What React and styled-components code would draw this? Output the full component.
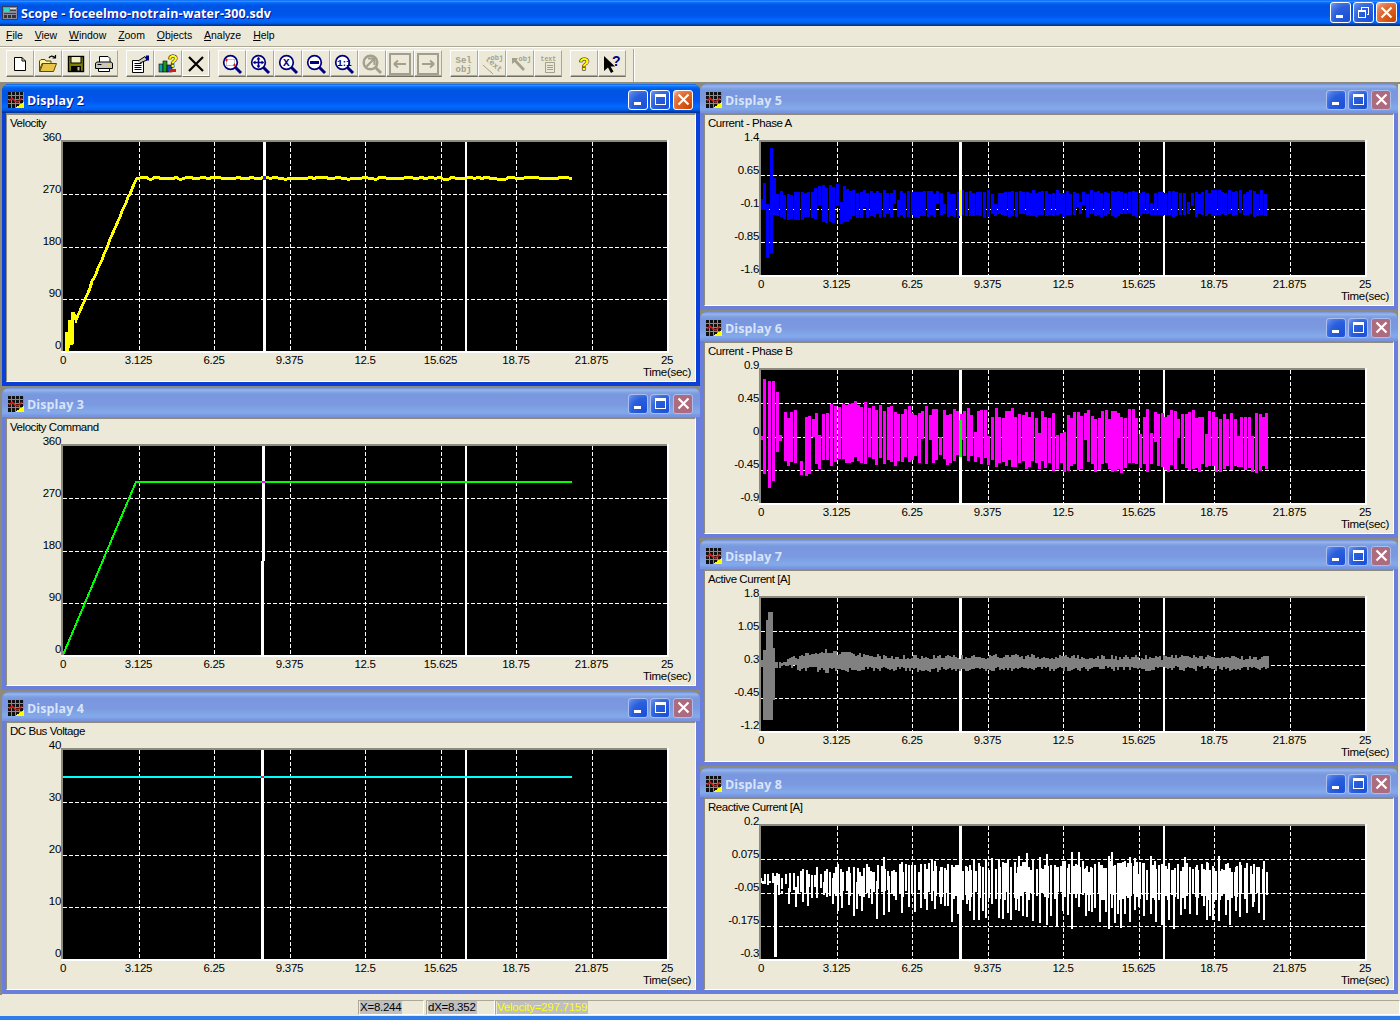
import React from 'react'
import styled, { createGlobalStyle } from 'styled-components'

const Global = createGlobalStyle`
  html, body { margin: 0; padding: 0; background: #ece9d8; }
  * { box-sizing: border-box; }
`

const UI_FONT = '"Liberation Sans", Arial, sans-serif'
const CAPTION_FONT = '"Open Sans", "DejaVu Sans", sans-serif'

const ACTIVE_GRADIENT = `linear-gradient(180deg, #0058ee 0%, #3593ff 4%, #288eff 6%, #127dff 8%, #036ffc 10%, #0262ee 14%, #0057e5 20%, #0054e3 24%, #0055eb 56%, #005bf5 66%, #026afe 76%, #0062ef 86%, #0052d6 92%, #0040ab 94%, #003092 100%)`
const INACTIVE_GRADIENT = `linear-gradient(180deg, #7697e7 0%, #7e9ee3 3%, #94afe8 6%, #97b4e9 8%, #82a5e4 14%, #7c9fe2 17%, #7996de 25%, #7b99e1 56%, #82a9e9 81%, #80a5e7 89%, #7b96e1 94%, #7a93df 97%, #7a93df 100%)`

const Root = styled.div`
  width: 1400px;
  height: 1020px;
  display: flex;
  flex-direction: column;
  overflow: hidden;
  background: #ece9d8;
  font: 11px ${UI_FONT};
  color: #000;
`

const TitleBar = styled.div`
  height: 26px;
  flex: none;
  display: flex;
  align-items: center;
  padding: 0 3px 1px 2px;
  gap: 3px;
  background: ${ACTIVE_GRADIENT};
`

const TitleText = styled.div`
  flex: 1;
  padding-top: 1px;
  color: #fff;
  font: bold 12.5px ${CAPTION_FONT};
  letter-spacing: 0.1px;
  text-shadow: 1px 1px #0f1089;
`

const CaptionButtons = styled.div`
  display: flex;
  gap: 2px;
`

const CaptionButton = styled.div`
  width: ${p => p.$big ? 21 : 20}px;
  height: ${p => p.$big ? 21 : 20}px;
  margin-left: ${p => p.$close && !p.$big ? 1 : 0}px;
  border-radius: 3px;
  display: flex;
  align-items: center;
  justify-content: center;
  border: 1px solid ${p => p.$active ? '#fff' : '#a9bdee'};
  background: ${p => p.$close
    ? (p.$active
      ? 'radial-gradient(circle at 90% 90%, #cc4600 0, #dc6527 55%, #e8835a 80%, #ffccb2 100%)'
      : '#ad6c7e')
    : 'radial-gradient(circle at 85% 85%, #1c50d8 0, #2a5fdc 55%, #4d7be6 80%, #7d9cee 100%)'};
`

const MenuBar = styled.div`
  height: 20px;
  flex: none;
  display: flex;
  align-items: center;
  gap: 12px;
  padding: 0 0 2px 6px;
`

const MenuItem = styled.span`
  font-size: 10.5px;
  letter-spacing: -0.05px;
  u { text-decoration: underline; }
`

const Toolbar = styled.div`
  height: 36px;
  flex: none;
  display: flex;
  align-items: flex-start;
  padding: 3px 0 0 6px;
  border-top: 1px solid #aca899;
  box-shadow: inset 0 1px 0 #fff;
`

const ToolGroup = styled.div`
  display: flex;
  margin-right: 8px;
`

const ToolButton = styled.div`
  width: 28px;
  height: 27px;
  display: flex;
  align-items: center;
  justify-content: center;
  background: #ece9d8;
  border-top: 1px solid #fff;
  border-left: 1px solid #fff;
  border-right: 1px solid #aca899;
  border-bottom: 1px solid #716f64;
  box-shadow: ${p => p.$flat ? 'inset -1px -1px 0 #fff' : 'inset 0 -1px 0 #aca899'};
`

const ToolDivider = styled.div`
  width: 2px;
  height: 33px;
  margin: -1px 0 0 -1px;
  border-left: 1px solid #aca899;
  border-right: 1px solid #fff;
`

const Workspace = styled.div`
  height: 913px;
  flex: none;
  display: flex;
  align-items: flex-start;
  border-top: 2px solid #8d8b7e;
  border-left: 2px solid #8d8b7e;
`

const Column = styled.div`
  width: 698px;
  display: flex;
  flex-direction: column;
  gap: 2px;
  background: #8d8b7e;
`

const Win = styled.div`
  height: ${p => p.$height}px;
  display: flex;
  flex-direction: column;
  border-radius: 7px 7px 0 0;
  overflow: hidden;
  background: ${p => p.$active ? '#0a3fd8' : '#6a7fdc'};
`

const Caption = styled.div`
  height: 29px;
  flex: none;
  display: flex;
  align-items: center;
  padding: 2px 7px 0 6px;
  gap: 3px;
  background: ${p => p.$active ? ACTIVE_GRADIENT : INACTIVE_GRADIENT};
`

const CaptionTitle = styled.div`
  flex: 1;
  padding-top: 1px;
  font: bold 12.5px ${CAPTION_FONT};
  letter-spacing: 0.1px;
  color: ${p => p.$active ? '#fff' : '#d8e4f8'};
  text-shadow: ${p => p.$active ? '1px 1px #0f1089' : 'none'};
`

const Body = styled.div`
  flex: 1;
  margin: 0 4px 4px 4px;
  display: flex;
  flex-direction: column;
  background: #ece9d8;
  border-top: 2px solid #8d8b7e;
  border-left: 1px solid #8d8b7e;
  border-right: 1px solid #fff;
  border-bottom: 1px solid #fff;
`

const PlotTitle = styled.div`
  height: 14px;
  flex: none;
  padding: 2px 0 0 3px;
  line-height: 13px;
  font-size: 11.5px;
  letter-spacing: -0.45px;
`

const Chart = styled.svg`
  display: block;
  flex: none;
`

const AxisText = styled.text`
  font: 11.5px ${UI_FONT};
  letter-spacing: -0.3px;
  fill: #000;
`

const StatusBar = styled.div`
  height: 21px;
  flex: none;
  display: flex;
  align-items: flex-end;
  padding: 0 0 1px 358px;
`

const StatusCell = styled.div`
  width: ${p => p.$width ? `${p.$width}px` : 'auto'};
  flex: ${p => p.$width ? 'none' : '1'};
  height: 15px;
  margin-right: ${p => p.$gap || 0}px;
  padding: 0 0 0 1px;
  display: flex;
  align-items: center;
  border-top: 1px solid #aca899;
  border-left: 1px solid #aca899;
  border-bottom: 1px solid #fff;
  border-right: 1px solid #fff;
`

const StatusText = styled.span`
  background: #c0c0c0;
  color: ${p => p.$color || '#000'};
  font-size: 11.5px;
  letter-spacing: -0.25px;
  line-height: 13px;
  padding-right: 1px;
`

const BottomStrip = styled.div`
  height: 4px;
  flex: none;
  background: #2f7de8;
`

// ---- small drawings ----

const AppIcon = () => (
  <svg width="16" height="16" viewBox="0 0 16 16" shapeRendering="crispEdges">
    <rect x="0" y="1" width="16" height="14" fill="#3a3a5a" />
    <rect x="1" y="2" width="14" height="12" fill="#8a8a9c" />
    <rect x="2" y="3" width="5" height="4" fill="#30d8c8" />
    <rect x="8" y="3" width="6" height="1" fill="#dddddd" />
    <rect x="8" y="5" width="6" height="1" fill="#444" />
    <rect x="2" y="8" width="12" height="1" fill="#444" />
    <rect x="2" y="10" width="3" height="3" fill="#333" />
    <rect x="6" y="10" width="3" height="3" fill="#333" />
    <rect x="10" y="10" width="4" height="3" fill="#333" />
  </svg>
)

const DisplayIcon = () => (
  <svg width="16" height="16" viewBox="0 0 16 16" shapeRendering="crispEdges">
    <rect width="16" height="16" fill="#111" />
    <path d="M3 0V16M7 0V16M11 0V16M15 0V16M0 3H16M0 7H16M0 11H16" stroke="#8a8a8a" strokeWidth="1" />
    <path d="M1 9L4 6L7 9L10 10L14 6" stroke="#e01818" strokeWidth="1.5" fill="none" shapeRendering="auto" />
    <path d="M7 16L16 10V16Z" fill="#ffff00" />
  </svg>
)

const Glyph = ({ type }) => {
  if (type === 'min') return <svg width="13" height="13" viewBox="0 0 13 13"><rect x="2" y="9" width="7" height="3" fill="#fff" /></svg>
  if (type === 'max') return (
    <svg width="13" height="13" viewBox="0 0 13 13" shapeRendering="crispEdges">
      <path d="M1.5 3.5H11.5V11.5H1.5Z" fill="none" stroke="#fff" />
      <rect x="1" y="1" width="11" height="3" fill="#fff" />
    </svg>
  )
  if (type === 'restore') return (
    <svg width="13" height="13" viewBox="0 0 13 13" shapeRendering="crispEdges">
      <path d="M4.5 3.5V1.5H11.5V8.5H9.5" fill="none" stroke="#fff" />
      <path d="M1.5 4.5H8.5V11.5H1.5Z" fill="none" stroke="#fff" />
      <rect x="1" y="4" width="8" height="2" fill="#fff" />
    </svg>
  )
  return <svg width="13" height="13" viewBox="0 0 13 13"><path d="M1.5 1.5L11.5 11.5M11.5 1.5L1.5 11.5" stroke="#fff" strokeWidth="2.2" /></svg>
}

const IconSvg = ({ children }) => (
  <svg width="22" height="22" viewBox="0 0 22 22">{children}</svg>
)

const Lens = ({ color = '#000080', children }) => (
  <IconSvg>
    <path d="M14 14L20 20" stroke={color} strokeWidth="3" />
    <circle cx="9.5" cy="9.5" r="6.8" fill={color === '#000080' ? '#fff' : '#ece9d8'} stroke={color} strokeWidth={color === '#000080' ? 1.7 : 2.4} />
    {children}
  </IconSvg>
)

const IconText = styled.text`
  font: bold ${p => p.$size || 9}px "Liberation Mono", monospace;
  letter-spacing: ${p => p.$tight ? '-1.2px' : '0'};
  fill: ${p => p.$fill || '#a39f8e'};
`

const HelpMark = styled.text`
  font: bold ${p => p.$size || 17}px "Liberation Sans", sans-serif;
  fill: ${p => p.$fill};
  stroke: ${p => p.$line || 'none'};
  stroke-width: 1px;
  paint-order: stroke;
`

const GRAY = '#a39f8e'

const icons = {
  page: (
    <IconSvg>
      <path d="M5.5 4.5H13L16.5 8V17.5H5.5Z" fill="#fff" stroke="#000" />
      <path d="M13 4.5V8H16.5" fill="none" stroke="#000" />
    </IconSvg>
  ),
  open: (
    <IconSvg>
      <path d="M2.5 8V18.5H16.5L19.5 10.5H6L3 18" fill="#e8c448" stroke="#5a4a00" />
      <path d="M2.5 8L4 6.5H8L9 8H14V10.5H5L2.5 17Z" fill="#fff3a0" stroke="#5a4a00" />
      <path d="M12 5C13 2.5 16 2.5 18 4.5M18.5 2V5H15.5" fill="none" stroke="#000" strokeWidth="1.2" />
    </IconSvg>
  ),
  save: (
    <IconSvg>
      <rect x="3.5" y="3.5" width="15" height="15" fill="#808000" stroke="#000" strokeWidth="1.4" />
      <rect x="6" y="3.5" width="10" height="6.5" fill="#f4f0c0" stroke="#000" />
      <rect x="6" y="13" width="10" height="5.5" fill="#000" />
      <rect x="12.5" y="14" width="2" height="3.5" fill="#c0c0a0" />
    </IconSvg>
  ),
  print: (
    <IconSvg>
      <path d="M6.5 9.5V3.5H15L17 5.5V9.5" fill="#fff" stroke="#000" />
      <path d="M2.5 11C2.5 9.5 3.5 9 5 9H17C18.5 9 19.5 9.5 19.5 11V15.5H2.5Z" fill="#c8c8c0" stroke="#000" />
      <rect x="4.5" y="11" width="4" height="1" fill="#000" />
      <rect x="14" y="11" width="3" height="1.5" fill="#e8d040" />
      <path d="M5.5 15.5H16.5V18.5H5.5Z" fill="#fff" stroke="#000" />
    </IconSvg>
  ),
  props: (
    <IconSvg>
      <path d="M3.5 7.5H14.5V19.5H3.5Z" fill="#fff" stroke="#000" />
      <path d="M5.5 10.5H12.5M5.5 12.5H12.5M5.5 14.5H12.5M5.5 16.5H12.5" stroke="#000" />
      <path d="M9 8L16 3.5L18 7L11 10" fill="#c8c8c0" stroke="#000" />
      <rect x="17" y="2.5" width="3" height="5" fill="#000080" />
    </IconSvg>
  ),
  wizard: (
    <IconSvg>
      <rect x="2" y="11" width="4" height="8" fill="#18a0a0" stroke="#000" strokeWidth="0.6" />
      <rect x="6" y="8" width="4" height="11" fill="#18a018" stroke="#000" strokeWidth="0.6" />
      <rect x="10" y="12" width="5" height="7" fill="#1848c8" stroke="#000" strokeWidth="0.6" />
      <rect x="12" y="16" width="7" height="3" fill="#d81818" />
      <HelpMark x="11" y="14" $size={16} $fill="#ffff00" $line="#000">?</HelpMark>
    </IconSvg>
  ),
  cross: (
    <IconSvg>
      <path d="M4 4L18 18M18 4L4 18" stroke="#000" strokeWidth="2.2" />
    </IconSvg>
  ),
  zoomBox: (
    <Lens>
      <rect x="5.5" y="6.5" width="8" height="6" fill="none" stroke="#808080" strokeDasharray="1 1" />
      <path d="M4 7H7M5.5 5.5V8.5M12 12H15M13.5 10.5V13.5" stroke="#d01818" />
    </Lens>
  ),
  zoomIn: (
    <Lens>
      <path d="M9.5 4.5V14.5M4.5 9.5H14.5" stroke="#000080" strokeWidth="1.6" />
      <path d="M7.5 6.5L9.5 4L11.5 6.5ZM7.5 12.5L9.5 15L11.5 12.5ZM6.5 7.5L4 9.5L6.5 11.5ZM12.5 7.5L15 9.5L12.5 11.5Z" fill="#000080" />
    </Lens>
  ),
  zoomX: (
    <Lens>
      <IconText x="6" y="13" $size={11} $fill="#000080">X</IconText>
    </Lens>
  ),
  zoomOut: (
    <Lens>
      <rect x="5" y="8" width="9" height="3" fill="#000080" />
    </Lens>
  ),
  zoomOne: (
    <Lens>
      <IconText x="4" y="13" $size={9.5} $fill="#000080" $tight>1:1</IconText>
    </Lens>
  ),
  zoomOff: (
    <Lens color={GRAY}>
      <path d="M5.5 13.5L13 6M7 5.5H13.5V12" fill="none" stroke={GRAY} strokeWidth="2.2" />
    </Lens>
  ),
  backOff: (
    <IconSvg>
      <rect x="1" y="1" width="20" height="20" fill="none" stroke={GRAY} strokeWidth="2" />
      <path d="M5 11H17M5 11L9 7.5M5 11L9 14.5" fill="none" stroke={GRAY} strokeWidth="2" />
    </IconSvg>
  ),
  nextOff: (
    <IconSvg>
      <rect x="1" y="1" width="20" height="20" fill="none" stroke={GRAY} strokeWidth="2" />
      <path d="M5 11H17M17 11L13 7.5M17 11L13 14.5" fill="none" stroke={GRAY} strokeWidth="2" />
    </IconSvg>
  ),
  selObj: (
    <IconSvg>
      <IconText x="2.5" y="10">Sel</IconText>
      <IconText x="2.5" y="19">obj</IconText>
    </IconSvg>
  ),
  textObj: (
    <IconSvg>
      <IconText x="9.5" y="7" $size={7}>obj</IconText>
      <g transform="translate(4 7) rotate(40)">
        <IconText x="0" y="0" $size={8}>text</IconText>
      </g>
      <path d="M2 12L12 21" stroke={GRAY} />
    </IconSvg>
  ),
  arrowObj: (
    <IconSvg>
      <IconText x="9.5" y="8" $size={7}>obj</IconText>
      <path d="M3 5H9L7.5 7L16 16L14 18L5.5 9L3 11Z" fill={GRAY} />
    </IconSvg>
  ),
  textDoc: (
    <IconSvg>
      <IconText x="3.5" y="8" $size={6.5}>text</IconText>
      <path d="M8.5 9.5H17.5V19.5H8.5Z" fill="#ece9d8" stroke={GRAY} />
      <path d="M10 12.5H16M10 14.5H16M10 16.5H16" stroke={GRAY} />
    </IconSvg>
  ),
  help: (
    <IconSvg>
      <HelpMark x="6" y="17" $fill="#ffff00" $line="#000">?</HelpMark>
    </IconSvg>
  ),
  cursorHelp: (
    <IconSvg>
      <path d="M3 3V18L7 14.5L10 20L12.5 18.5L9.5 13.5H14Z" fill="#000" />
      <HelpMark x="11" y="13" $size={14} $fill="#000080">?</HelpMark>
    </IconSvg>
  ),
}

const toolGroups = [
  ['page', 'open', 'save', 'print'],
  ['props', 'wizard', 'cross'],
  ['zoomBox', 'zoomIn', 'zoomX', 'zoomOut', 'zoomOne', 'zoomOff', 'backOff', 'nextOff'],
  ['selObj', 'textObj', 'arrowObj', 'textDoc'],
  ['help', 'cursorHelp'],
]

// ---- chart data ----

const makeRandom = seed => () => {
  seed |= 0
  seed = (seed + 0x6d2b79f5) | 0
  let t = Math.imul(seed ^ (seed >>> 15), 1 | seed)
  t = (t + Math.imul(t ^ (t >>> 7), 61 | t)) ^ t
  return ((t ^ (t >>> 14)) >>> 0) / 4294967296
}

const envelope = pts => x => {
  if (x <= pts[0][0]) return pts[0][1]
  for (let i = 1; i < pts.length; i++) {
    if (x <= pts[i][0]) {
      const [x0, y0] = pts[i - 1]
      const [x1, y1] = pts[i]
      return y0 + (y1 - y0) * (x - x0) / (x1 - x0)
    }
  }
  return pts[pts.length - 1][1]
}

// vertical strokes between an upper and lower envelope, the way the sampled traces look
const strokes = ({ seed, from, to, step, top, bottom, jitter, full = 1, center, reach = 4 }) => {
  const r = makeRandom(seed)
  const topAt = envelope(top)
  const botAt = envelope(bottom)
  let d = ''
  let x = from
  while (x < to) {
    let t = topAt(x) + r() * jitter
    let b = botAt(x) - r() * jitter
    if (r() > full) {
      if (r() < 0.5) b = center + r() * reach
      else t = center - r() * reach
    }
    d += `M${x} ${Math.round(t)}V${Math.round(b)}`
    x += step[0] + Math.floor(r() * (step[1] - step[0] + 1))
  }
  return d
}

const bars = list => list.map(([x, t, b]) => `M${x} ${t}V${b}`).join('')

const rampNoise = () => {
  const r = makeRandom(11)
  let d = 'M3 209V190L4 209L6 203L7 178L9 203L10 170L13 178L15 173'
  for (let x = 17; x <= 72; x += 2) {
    const y = 209 - 40 - (x - 17) * 2.36 + (r() - 0.5) * 3
    d += `L${x} ${Math.round(y)}`
  }
  for (let x = 74; x <= 509; x += 3) {
    d += `L${x} ${36 + Math.round((r() - 0.5) * 2.6)}`
  }
  return d
}

const LEFT = { height: 209, second: 402 }
const RIGHT = { height: 133, first: 198, second: 402 }

const displays = {
  left: [
    {
      id: 2, active: true, title: 'Velocity', yLabels: ['360', '270', '180', '90', '0'], first: 200, ...LEFT,
      traces: [{ d: rampNoise(), color: '#ffff00', width: 3 }],
      tint: { y: 34, h: 4, color: '#2020ff' },
    },
    {
      id: 3, title: 'Velocity Command', yLabels: ['360', '270', '180', '90', '0'], first: 199, shiftAt: 115, ...LEFT,
      traces: [{ d: 'M0 209L73 36H509', color: '#00ff00', width: 2 }],
      tint: { y: 35, h: 2, color: '#ff00ff' },
    },
    {
      id: 4, title: 'DC Bus Voltage', yLabels: ['40', '30', '20', '10', '0'], first: 198, ...LEFT,
      traces: [{ d: 'M0 27H509', color: '#00ffff', width: 2 }],
      tint: { y: 26, h: 2, color: '#ff2020' },
    },
  ],
  right: [
    {
      id: 5, title: 'Current - Phase A', yLabels: ['1.4', '0.65', '-0.1', '-0.85', '-1.6'], ...RIGHT,
      traces: [
        {
          d: strokes({
            seed: 5, from: 16, to: 508, step: [3, 4], jitter: 4, full: 0.86, center: 62, reach: 4,
            top: [[14, 49], [50, 49], [55, 42], [80, 42], [95, 48], [508, 48]],
            bottom: [[14, 77], [50, 79], [80, 84], [95, 76], [508, 75]],
          }),
          color: '#0000ff', width: 3,
        },
        { d: bars([[1, 57, 68], [3, 41, 68], [6, 62, 116], [10, 6, 111], [13, 36, 73]]), color: '#0000ff', width: 3 },
      ],
      tint: { y: 48, h: 26, color: '#ffff00' },
    },
    {
      id: 6, title: 'Current - Phase B', yLabels: ['0.9', '0.45', '0', '-0.45', '-0.9'], ...RIGHT,
      traces: [
        { d: bars([[1, 66, 70], [3, 9, 104], [8, 11, 118], [12, 11, 111], [16, 22, 82], [19, 65, 71], [24, 42, 91], [27, 48, 96], [30, 42, 92], [34, 40, 93], [40, 91, 105]]), color: '#ff00ff', width: 3 },
        {
          d: strokes({
            seed: 6, from: 45, to: 508, step: [3, 4], jitter: 10, full: 0.85, center: 67, reach: 6,
            top: [[45, 42], [70, 32], [100, 30], [140, 35], [250, 38], [508, 40]],
            bottom: [[45, 106], [60, 100], [90, 96], [200, 95], [300, 102], [508, 104]],
          }),
          color: '#ff00ff', width: 3,
        },
      ],
      tint: { y: 50, h: 37, color: '#00ff00' },
    },
    {
      id: 7, title: 'Active Current [A]', yLabels: ['1.8', '1.05', '0.3', '-0.45', '-1.2'], ...RIGHT,
      traces: [
        { d: bars([[1, 62, 69], [3, 52, 122], [6, 22, 122], [8, 14, 122], [10, 14, 122], [12, 50, 102], [15, 64, 70]]), color: '#808080', width: 3 },
        {
          d: strokes({
            seed: 7, from: 19, to: 508, step: [2, 2], jitter: 5,
            top: [[19, 64], [25, 60], [45, 54], [60, 51], [75, 52], [90, 54], [120, 56], [508, 57]],
            bottom: [[19, 70], [40, 73], [70, 75], [100, 74], [508, 73]],
          }),
          color: '#808080', width: 2,
        },
      ],
    },
    {
      id: 8, title: 'Reactive Current [A]', yLabels: ['0.2', '0.075', '-0.05', '-0.175', '-0.3'], ...RIGHT,
      traces: [
        {
          d: strokes({
            seed: 28, from: 12, to: 508, step: [3, 7], jitter: 24,
            top: [[0, 44], [100, 32], [350, 24], [508, 28]],
            bottom: [[0, 70], [60, 90], [200, 100], [400, 106], [508, 96]],
          }),
          color: '#fff', width: 2,
        },
        {
          d: strokes({
            seed: 18, from: 0, to: 508, step: [2, 4], jitter: 9,
            top: [[0, 48], [30, 42], [100, 38], [350, 34], [508, 38]],
            bottom: [[0, 62], [50, 70], [200, 74], [508, 76]],
          }),
          color: '#fff', width: 2,
        },
        { d: bars([[14, 50, 131]]), color: '#fff', width: 3 },
      ],
    },
  ],
}

const X_LABELS = ['0', '3.125', '6.25', '9.375', '12.5', '15.625', '18.75', '21.875', '25']
const PLOT_LEFT = 56
const PLOT_TOP = 13
const PLOT_WIDTH = 604

const Plot = ({ height, yLabels, traces, first, second, tint, shiftAt }) => {
  const bottom = PLOT_TOP + height
  const right = PLOT_LEFT + PLOT_WIDTH
  const breakY = shiftAt || height
  return (
    <Chart width="688" height={height + 42}>
      <g shapeRendering="crispEdges">
        <rect x={PLOT_LEFT - 2} y={PLOT_TOP - 2} width={PLOT_WIDTH + 4} height={height + 4} fill="#fff" />
        <rect x={PLOT_LEFT - 2} y={PLOT_TOP - 2} width={PLOT_WIDTH + 2} height={height + 2} fill="#8d8b7e" />
        <rect x={PLOT_LEFT} y={PLOT_TOP} width={PLOT_WIDTH} height={height} fill="#000" />
      </g>
      <svg x={PLOT_LEFT} y={PLOT_TOP} width={PLOT_WIDTH} height={height} overflow="hidden">
        <g stroke="#fff" strokeDasharray="4 2" shapeRendering="crispEdges">
          {[1, 2, 3].map(i => {
            const y = Math.round(height * i / 4) + 0.5
            return <line key={i} x1="0" x2={PLOT_WIDTH} y1={y} y2={y} />
          })}
          {[1, 2, 3, 4, 5, 6, 7].map(i => {
            const x = Math.round(PLOT_WIDTH * i / 8) + 0.5
            return <line key={i} x1={x} x2={x} y1="0" y2={height} />
          })}
        </g>
        <g shapeRendering="crispEdges" fill="#fff">
          <rect x={first} y="0" width="3" height={breakY} />
          {shiftAt && <rect x={first - 1} y={shiftAt} width="3" height={height - shiftAt} />}
          <rect x={second} y="0" width="2" height={height} />
        </g>
        {traces.map((t, i) => (
          <path key={i} d={t.d} fill="none" stroke={t.color} strokeWidth={t.width} shapeRendering="crispEdges" />
        ))}
        {tint && <rect x={first} y={tint.y} width="3" height={tint.h} fill={tint.color} shapeRendering="crispEdges" />}
      </svg>
      {yLabels.map((label, i) => (
        <AxisText key={label} x={PLOT_LEFT - 2} y={PLOT_TOP - 1 + i * (height - 1.5) / 4} textAnchor="end">{label}</AxisText>
      ))}
      {X_LABELS.map((label, i) => (
        <AxisText key={label} x={PLOT_LEFT + PLOT_WIDTH * i / 8} y={bottom + 13} textAnchor="middle">{label}</AxisText>
      ))}
      <AxisText x={right + 24} y={bottom + 25} textAnchor="end">Time(sec)</AxisText>
    </Chart>
  )
}

const DisplayWindow = ({ display, height }) => {
  const { id, active, title, ...plot } = display
  return (
    <Win $height={height} $active={active}>
      <Caption $active={active}>
        <DisplayIcon />
        <CaptionTitle $active={active}>Display {id}</CaptionTitle>
        <CaptionButtons>
          <CaptionButton $active={active}><Glyph type="min" /></CaptionButton>
          <CaptionButton $active={active}><Glyph type="max" /></CaptionButton>
          <CaptionButton $active={active} $close><Glyph type="close" /></CaptionButton>
        </CaptionButtons>
      </Caption>
      <Body>
        <PlotTitle>{title}</PlotTitle>
        <Plot {...plot} />
      </Body>
    </Win>
  )
}

const menus = ['File', 'View', 'Window', 'Zoom', 'Objects', 'Analyze', 'Help']

export default function App() {
  return (
    <Root>
      <Global />
      <TitleBar>
        <AppIcon />
        <TitleText>Scope - foceelmo-notrain-water-300.sdv</TitleText>
        <CaptionButtons>
          <CaptionButton $big $active><Glyph type="min" /></CaptionButton>
          <CaptionButton $big $active><Glyph type="restore" /></CaptionButton>
          <CaptionButton $big $active $close><Glyph type="close" /></CaptionButton>
        </CaptionButtons>
      </TitleBar>
      <MenuBar>
        {menus.map(m => (
          <MenuItem key={m}><u>{m[0]}</u>{m.slice(1)}</MenuItem>
        ))}
      </MenuBar>
      <Toolbar>
        {toolGroups.map((group, i) => (
          <ToolGroup key={i}>
            {group.map(name => (
              <ToolButton key={name} $flat={name === 'cross'}>{icons[name]}</ToolButton>
            ))}
          </ToolGroup>
        ))}
        <ToolDivider />
      </Toolbar>
      <Workspace>
        <Column>
          {displays.left.map(d => <DisplayWindow key={d.id} display={d} height={302} />)}
        </Column>
        <Column>
          {displays.right.map(d => <DisplayWindow key={d.id} display={d} height={226} />)}
        </Column>
      </Workspace>
      <StatusBar>
        <StatusCell $width={66} $gap={2}><StatusText>X=8.244</StatusText></StatusCell>
        <StatusCell $width={69}><StatusText>dX=8.352</StatusText></StatusCell>
        <StatusCell><StatusText $color="#ffff00">Velocity=297.7159</StatusText></StatusCell>
      </StatusBar>
      <BottomStrip />
    </Root>
  )
}
